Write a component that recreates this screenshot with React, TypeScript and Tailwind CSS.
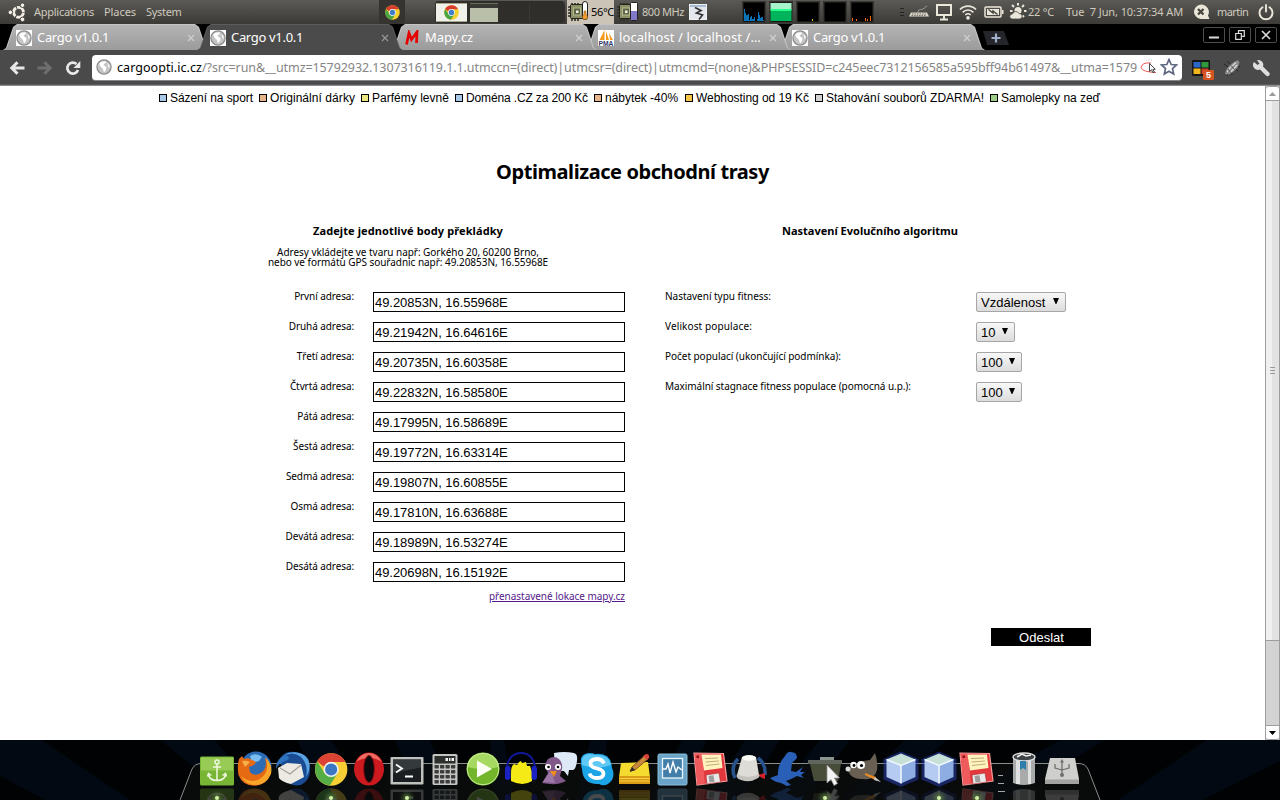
import type { ReactNode } from "react";

/* ---------- shared drawings ---------- */

function ChromeLogo({ className }: { className?: string }) {
  return (
    <svg viewBox="0 0 34 34" className={className}>
      <circle cx="17" cy="17" r="16.5" fill="#f7d02c" />
      <path d="M2.7 8.8 A16.5 16.5 0 0 0 15.5 33.4 L23.6 20.8 L17 17 L10.4 20.8Z" fill="#4aa544" />
      <path d="M2.7 8.8 A16.5 16.5 0 0 1 31.6 9.4 L17 9.4 L10 14.5Z" fill="#d93b2f" />
      <circle cx="17" cy="17" r="7.8" fill="#f2f2ee" />
      <circle cx="17" cy="17" r="6" fill="#3f7fc9" />
    </svg>
  );
}

function Globe({ square = false }: { square?: boolean }) {
  return (
    <svg viewBox="0 0 16 16" className="size-4 shrink-0">
      {square && <rect width="16" height="16" fill="#fff" />}
      <circle cx="8" cy="8" r="7.1" fill="#c4c4c4" stroke="#8a8a8a" strokeWidth="1.200" />
      <path d="M3 4.500 Q5 2 9.500 2.200 L10 4 L7.500 5 L8.500 7 L10.500 8 L10 11 L8 13.500 L7 10 L4.500 7.500Z" fill="#fff" />
      <path d="M11.500 4 L13.500 6 L13.800 9 L12.200 8Z" fill="#f4f4f4" />
    </svg>
  );
}

function Chip({ children }: { children: ReactNode }) {
  return (
    <svg viewBox="0 0 22 22" className="h-[22px] w-[22px] shrink-0">
      <path d="M1 6h3M1 9h3M1 12h3M1 15h3M5 2v3M8 2v3M11 2v3M5 17v3M8 17v3M11 17v3" stroke="#2e2f22" strokeWidth="1.6" />
      <rect x="3.5" y="3.5" width="13" height="14" rx="1" fill="#8c9166" stroke="#22231a" />
      <rect x="6.5" y="7" width="7" height="7" fill="#5f6446" stroke="#b6ba90" />
      <rect x="9" y="9.500" width="2.500" height="2.500" fill="#f0f1df" />
      {children}
    </svg>
  );
}

function Graph({ children }: { children?: ReactNode }) {
  return (
    <svg viewBox="0 0 24 22" className="mr-[3px] h-[22px] w-6 shrink-0">
      <rect x="0.5" y="0.5" width="23" height="21" fill="#000" stroke="#2b2a27" />
      <rect x="1" y="1" width="22" height="20" fill="none" stroke="#55534d" strokeWidth=".6" />
      {children}
    </svg>
  );
}

/* ---------- desktop panel ---------- */

function TopPanel() {
  return (
    <header className="flex h-6 items-center bg-linear-to-b from-[#5b5a56] to-[#3b3a36] text-[11px] whitespace-pre text-[#cfc9be]">
      <svg viewBox="0 0 18 22" className="ml-2 h-[22px] w-[18px] shrink-0">
        <circle cx="10.500" cy="11.300" r="4.900" fill="none" stroke="#f3efe6" strokeWidth="2.900" strokeDasharray="9.260 1" strokeDashoffset="-0.500" />
        <g fill="#f3efe6" stroke="#4b4a46" strokeWidth="1">
          <circle cx="2.400" cy="11.300" r="2.300" />
          <circle cx="14.500" cy="4.200" r="2.300" />
          <circle cx="14.500" cy="18.400" r="2.300" />
        </g>
      </svg>
      <span className="ml-2 w-[70px] tracking-[-0.27px]">Applications</span>
      <span className="w-[42px] tracking-[-0.07px]">Places</span>
      <span className="w-[233px] tracking-[-0.3px]">System</span>
      <div className="flex h-6 w-[26px] items-center justify-center bg-[#353431]">
        <ChromeLogo className="size-[15px]" />
      </div>

      <div className="ml-[30px] flex h-[22px] w-[130px] items-center gap-[3px] rounded bg-[#2f2e2b] px-px">
        <div className="flex h-[19px] w-[31px] items-center justify-center border-y border-[#a6a88c] bg-[#f1f1ec]">
          <ChromeLogo className="size-[15px]" />
        </div>
        <div className="h-[19px] w-[28px] border-t border-[#6b6d5c] bg-linear-to-b from-[#3a3a34] from-20% to-[#b9bfa9] to-20%" />
        <div className="h-[19px] w-[29px] border-r border-[#393835]" />
        <div className="h-[19px] w-[29px]" />
      </div>

      <div className="ml-0.5 flex h-6 w-[47px] items-center bg-[#cdc4b8] text-black">
        <Chip>
          <rect x="15.500" y="0.500" width="5" height="18" rx="2.500" fill="#fff" stroke="#222" />
          <path d="M17 10h2v3.500a2.600 2.600 0 1 1-2 0z" fill="#f39a2c" stroke="#7a4c0c" strokeWidth=".5" />
        </Chip>
        <span className="ml-0.5 tracking-[-0.32px]">56°C</span>
      </div>
      <div className="ml-0.5 flex w-[26px]">
        <Chip>
          <rect x="14.500" y="1.500" width="7" height="18" rx="1" fill="#fff" stroke="#222" />
          <rect x="15" y="10" width="6" height="9" fill="#8078c8" />
        </Chip>
      </div>
      <span className="w-[47px] tracking-[-0.43px]">800 MHz</span>
      <svg viewBox="0 0 18 18" className="size-[18px] shrink-0">
        <rect x="0.500" y="1.500" width="17" height="15" fill="#e4e8ee" stroke="#eef1f4" />
        <rect x="1" y="2" width="16" height="2" fill="#a9bbd3" />
        <path d="M6 4.500l6 3-4.500 2.500 6 2-3.500 4.500" fill="none" stroke="#333" strokeWidth="1.700" />
      </svg>

      <div className="ml-[35px] flex w-[135px]">
        <Graph>
          <path d="M2 20V8h1v4h1v2h2v-1h1v6h1v-3h1v-1h1v3h2v-2h1v4h2v-2h1v-7h1v3h1v3h1v-1h2v3h1v1z" fill="#0b74b8" />
        </Graph>
        <Graph>
          <rect x="1.500" y="2" width="21" height="7" fill="#a8f2cb" />
          <rect x="1.500" y="8" width="21" height="2" fill="#2aff8c" />
          <rect x="1.500" y="10" width="21" height="10" fill="#00b45c" />
        </Graph>
        <Graph>
          <path d="M16 18h1v2h-1z" fill="#e0c020" />
        </Graph>
        <Graph />
        <Graph>
          <path d="M2 20v-3h1v3zM6 20v-2h1v2zM15 20v-3h1v3zM17 20v-2h1v2zM20 20v-5h1v5z" fill="#ff6a10" />
        </Graph>
      </div>

      <div className="ml-[23px] flex h-2 w-1 flex-col justify-between">
        <div className="h-px bg-[#262522]" />
        <div className="h-px bg-[#262522]" />
        <div className="h-px bg-[#262522]" />
      </div>
      <svg viewBox="0 0 20 16" className="ml-[5px] h-4 w-5 shrink-0">
        <path d="M2 8.500h16l2 4H0z" fill="#dcd7cb" />
        <path d="M3 10h14M2.500 11.500h15" stroke="#77736a" strokeDasharray="1.500 1" />
        <path d="M9 8c0-3 3-2 5-3s2-2 4-3" fill="none" stroke="#a8a398" />
      </svg>
      <svg viewBox="0 0 18 18" className="ml-[6px] size-[18px] shrink-0" fill="none" stroke="#ebe6da" strokeWidth="2">
        <path d="M2 2h14v10H2zM5 16.500h8M9 13v3" />
      </svg>
      <svg viewBox="0 0 18 18" className="ml-[6px] size-[18px] shrink-0" fill="none" stroke="#ebe6da" strokeWidth="1.700">
        <path d="M1 6.500a11 11 0 0 1 16 0M3.700 9.300a7.300 7.300 0 0 1 10.600 0M6.300 12a3.900 3.900 0 0 1 5.400 0" />
        <circle cx="9" cy="14.800" r="1" fill="#ebe6da" />
      </svg>
      <svg viewBox="0 0 20 14" className="ml-[7px] h-3.5 w-5 shrink-0">
        <rect x="1" y="2" width="16" height="10" rx="1" fill="none" stroke="#ebe6da" strokeWidth="1.500" />
        <rect x="3" y="4" width="12" height="6" fill="#ebe6da" />
        <path d="M18 5h1.500v4H18z" fill="#ebe6da" />
        <path d="M4.500 4.500L9 8V6l4.500 3.500" stroke="#45443f" strokeWidth="1.500" fill="none" />
      </svg>
      <svg viewBox="0 0 18 18" className="ml-[5px] size-[18px] shrink-0">
        <circle cx="9" cy="7.500" r="3.500" fill="#ebe6da" />
        <path d="M9 0v2.500M3 2l2 2M15 2l-2 2M1 8h2.500M15 8h2.500M15 14l-1.500-1.500" stroke="#ebe6da" strokeWidth="2" />
        <path d="M3 16a2.500 2.500 0 0 1 .5-5 3.500 3.500 0 0 1 6.500-.5 2.800 2.800 0 0 1 1 5.500z" fill="#ebe6da" stroke="#4a4945" strokeWidth=".8" />
      </svg>
      <span className="ml-px w-[38px] tracking-[-0.22px]">22 °C</span>
      <span className="w-[126px] tracking-[-0.1px]">Tue  7 Jun, 10:37:34 AM</span>
      <svg viewBox="0 0 18 18" className="size-[18px] shrink-0">
        <path d="M9 1.500a8 7.500 0 0 1 7 11l1.500 3.500H9a8 7.300 0 0 1 0-14.500z" fill="#ebe6da" />
        <path d="M6 6l5.500 5.500M11.500 6L6 11.500" stroke="#45443f" strokeWidth="2.300" />
      </svg>
      <span className="ml-[7px] w-[40px] tracking-[-0.55px]">martin</span>
      <svg viewBox="0 0 18 18" className="size-[18px] shrink-0" fill="none" stroke="#ebe6da" strokeWidth="1.900" strokeLinecap="round">
        <path d="M5.500 4.300a6.500 6.500 0 1 0 7 0M9 2v6.500" />
      </svg>
    </header>
  );
}

/* ---------- browser ---------- */

function Tab({ icon, title, active = false, tracking, stack }: { icon: ReactNode; title: string; active?: boolean; tracking: string; stack: string }) {
  return (
    <div
      className={`relative -mr-3 h-[26px] w-[206px] shrink-0 p-px pb-0 [clip-path:polygon(0_100%,3px_92%,10px_12%,14px_0,192px_0,196px_12%,203px_92%,206px_100%)] ${stack} ${active ? "bg-[#5c5c5c]" : "bg-[#c4c4c4]"}`}
    >
      <div
        className={`flex h-full items-center pl-3 [clip-path:polygon(0_100%,3px_92%,10px_10%,13px_0,191px_0,194px_10%,201px_92%,204px_100%)] ${active ? "bg-[#4b4b4b]" : "bg-linear-to-b from-[#b4b4b4] to-[#9b9b9b]"}`}
      >
        {icon}
        <span className={`mt-px ml-[5px] w-[150px] text-[13px] whitespace-nowrap text-white ${tracking}`}>{title}</span>
        <svg viewBox="0 0 8 8" className="size-2 shrink-0" stroke={active ? "#969696" : "#cfcfcf"} strokeWidth="1.200">
          <path d="M1 1l6 6M7 1L1 7" />
        </svg>
      </div>
    </div>
  );
}

function WindowButton({ children }: { children: ReactNode }) {
  return (
    <div className="flex h-4 w-[22px] items-center justify-center rounded-[2px] border border-[#4d4d4d]">
      <svg viewBox="0 0 10 10" className="size-2.5" fill="none" stroke="#dcdcdc" strokeWidth="1.200">
        {children}
      </svg>
    </div>
  );
}

function TabStrip() {
  return (
    <div className="flex h-[26px] bg-black pl-[3px]">
      <Tab stack="z-10" icon={<Globe square />} title="Cargo v1.0.1" tracking="tracking-[-0.32px]" />
      <Tab stack="z-40" active icon={<Globe square />} title="Cargo v1.0.1" tracking="tracking-[-0.32px]" />
      <Tab
        stack="z-30"
        icon={
          <svg viewBox="0 0 16 16" className="size-4 shrink-0">
            <path d="M2.500 14.500L5 3l2.500 6.500L13 2l-.5 11" fill="none" stroke="#e60000" strokeWidth="2.700" />
          </svg>
        }
        title="Mapy.cz"
        tracking="tracking-[-0.1px]"
      />
      <Tab
        stack="z-20"
        icon={
          <svg viewBox="0 0 16 16" className="size-4 shrink-0">
            <rect width="16" height="16" fill="#fff" />
            <path d="M6.500 0v10H1.500zM8 1l3 9H8zM11 3l4 7h-3z" fill="#f59a1c" />
            <text x="0.500" y="15.800" fontSize="6.500" fontWeight="700" fill="#333a6b" fontFamily="Liberation Sans" textLength="15" lengthAdjust="spacingAndGlyphs">
              PMA
            </text>
          </svg>
        }
        title="localhost / localhost /…"
        tracking="tracking-[0.08px]"
      />
      <Tab stack="z-10" icon={<Globe square />} title="Cargo v1.0.1" tracking="tracking-[-0.32px]" />
      <div className="ml-2.5 mt-[7px] flex h-3.5 w-[26px] items-center justify-center bg-[#24262b] [clip-path:polygon(0_0,80%_0,100%_100%,16%_100%)]">
        <svg viewBox="0 0 10 10" className="size-2.5" stroke="#9fb0cb" strokeWidth="2.200">
          <path d="M5 .5v9M.5 5h9" />
        </svg>
      </div>
      <div className="mt-[3px] ml-auto flex gap-1 pr-[3px]">
        <WindowButton>
          <path d="M0 7.500h10" strokeWidth="2" />
        </WindowButton>
        <WindowButton>
          <path d="M3.500 3V.7h5.800v5.600H7M.7 3.500h5.600v5.800H.7z" />
        </WindowButton>
        <WindowButton>
          <path d="M1 1l8 8M9 1L1 9" strokeWidth="1.600" />
        </WindowButton>
      </div>
    </div>
  );
}

function Toolbar() {
  return (
    <div className="flex h-9 items-center border-b border-[#8d8a8d] bg-[#4a4a4a] shadow-[inset_0_-1px_0_#5a5a5a]">
      <svg viewBox="0 0 16 16" className="ml-[9px] size-4 shrink-0" fill="none" stroke="#e8e8e8" strokeWidth="3">
        <path d="M15.500 8H4M8.500 2.200L2.800 8l5.700 5.800" />
      </svg>
      <svg viewBox="0 0 16 16" className="ml-3 size-4 shrink-0" fill="none" stroke="#6e6e6e" strokeWidth="3">
        <path d="M.5 8H12M7.500 2.200L13.200 8l-5.700 5.800" />
      </svg>
      <svg viewBox="0 0 16 16" className="ml-3 size-4 shrink-0">
        <path d="M13 10A5.500 5.500 0 1 1 11.500 4" fill="none" stroke="#e8e8e8" strokeWidth="2.700" />
        <path d="M15.300 1v7H8.500z" fill="#e8e8e8" />
      </svg>
      <div className="ml-[11px] flex h-[26px] w-[1090px] shrink-0 items-center rounded border-b border-[#85838a] bg-white pl-1">
        <Globe />
        <div className="mt-0.5 ml-[5px] w-[1020px] overflow-hidden text-[12.500px] whitespace-nowrap text-[#858585]">
          <span className="text-black tracking-[0.06px]">cargoopti.ic.cz</span>
          <span className="tracking-[-0.085px]">
            /?src=run&amp;__utmz=15792932.1307316119.1.1.utmccn=(direct)|utmcsr=(direct)|utmcmd=(none)&amp;PHPSESSID=c245eec7312156585a595bff94b61497&amp;__utma=1579
          </span>
        </div>
        <svg viewBox="0 0 18 18" className="ml-[3px] size-[18px] shrink-0">
          <path d="M11 5Q2 4 1 9.500 2 14 16 14.500" fill="none" stroke="#ee5a5a" />
          <path d="M6 2l1 1M9 .5v2M12 1l-1 2" stroke="#c9c9c9" strokeWidth=".7" />
          <path d="M9.500 5.500v8l2-1.700 1.500 3 1.300-.7-1.400-2.800h2.400z" fill="#fff" stroke="#333" strokeWidth=".9" />
        </svg>
        <svg viewBox="0 0 18 18" className="ml-0.5 size-[18px] shrink-0" fill="#fff" stroke="#5f6880" strokeWidth="1.700">
          <path d="M9 1.500l2.200 5 5.300.5-4 3.600 1.200 5.400L9 13.200 4.300 16l1.200-5.400-4-3.600 5.300-.5z" />
        </svg>
      </div>
      <svg viewBox="0 0 22 22" className="mt-0.5 ml-2.5 size-[22px] shrink-0">
        <rect x="0" y="2" width="18" height="16" rx="1" fill="#161616" />
        <rect x="1.500" y="4" width="7" height="5.500" fill="#2b66c9" />
        <rect x="9.500" y="4" width="7" height="5.500" fill="#2f9a3c" />
        <rect x="1.500" y="10.500" width="7" height="5.500" fill="#f2b51d" />
        <rect x="9.500" y="10.500" width="7" height="5.500" fill="#d33c2c" />
        <rect x="11" y="12" width="11" height="10" rx="1" fill="#d4551f" />
        <text x="14" y="20.300" fontSize="9" fontWeight="700" fill="#fff" fontFamily="Liberation Sans">
          5
        </text>
      </svg>
      <svg viewBox="0 0 20 18" className="ml-2 h-[18px] w-5 shrink-0">
        <path d="M2 5l4 3M5 2l4 4M10 16l-1-5M5 17l1-5M16 12l-4-3M18 8l-4-1" stroke="#252525" />
        <path d="M3 15Q4 8 12 3l4-2 1.500 2.500L16 8q-5 6-10 7.500z" fill="#8d8d8d" />
        <path d="M5 13Q8 8 14 3.500M8 14l7-8" stroke="#d9d9d9" strokeWidth="1.200" fill="none" />
        <path d="M6 10l3 4M9 6.500l3.500 4" stroke="#4c4c4c" />
      </svg>
      <svg viewBox="0 0 18 18" className="ml-2.5 size-[18px] shrink-0">
        <path d="M1 5.500A4.800 4.800 0 0 1 2 3l3.500 3L7.500 4.500 5 1.300A4.800 4.800 0 0 1 11 7.500L17 13.500a2 2 0 0 1-3 3L8 10.500A5 5 0 0 1 1 5.500z" fill="#dedede" />
      </svg>
    </div>
  );
}

/* ---------- page ---------- */

const ads = [
  { text: "Sázení na sport", box: "w-[100px]", color: "bg-[#a9c9ea]", tracking: "tracking-[-0.07px]" },
  { text: "Originální dárky", box: "w-[102px]", color: "bg-[#e8b48a]", tracking: "tracking-[0.06px]" },
  { text: "Parfémy levně", box: "w-[94px]", color: "bg-[#ece77f]", tracking: "tracking-[0.02px]" },
  { text: "Doména .CZ za 200 Kč", box: "w-[139px]", color: "bg-[#a9c9ea]", tracking: "tracking-[-0.14px]" },
  { text: "nábytek -40%", box: "w-[91px]", color: "bg-[#e8b48a]", tracking: "tracking-[-0.03px]" },
  { text: "Webhosting od 19 Kč", box: "w-[130px]", color: "bg-[#f8c548]", tracking: "tracking-[-0.05px]" },
  { text: "Stahování souborů ZDARMA!", box: "w-[175px]", color: "bg-[#d2d2d2]", tracking: "tracking-[0px]" },
  { text: "Samolepky na zeď", box: "w-[111px]", color: "bg-[#9ccc85]", tracking: "tracking-[-0.03px]" },
];

const addresses = [
  ["První adresa:", "49.20853N, 16.55968E"],
  ["Druhá adresa:", "49.21942N, 16.64616E"],
  ["Třetí adresa:", "49.20735N, 16.60358E"],
  ["Čtvrtá adresa:", "49.22832N, 16.58580E"],
  ["Pátá adresa:", "49.17995N, 16.58689E"],
  ["Šestá adresa:", "49.19772N, 16.63314E"],
  ["Sedmá adresa:", "49.19807N, 16.60855E"],
  ["Osmá adresa:", "49.17810N, 16.63688E"],
  ["Devátá adresa:", "49.18989N, 16.53274E"],
  ["Desátá adresa:", "49.20698N, 16.15192E"],
];

const settings = [
  { label: "Nastavení typu fitness:", value: "Vzdálenost", box: "w-[90px]", tracking: "tracking-[-0.03px]" },
  { label: "Velikost populace:", value: "10", box: "w-[39px]", tracking: "tracking-[0.12px]" },
  { label: "Počet populací (ukončující podmínka):", value: "100", box: "w-[46px]", tracking: "tracking-[-0.04px]" },
  { label: "Maximální stagnace fitness populace (pomocná u.p.):", value: "100", box: "w-[46px]", tracking: "tracking-[-0.06px]" },
];

function Page() {
  return (
    <main className="min-w-0 flex-1 text-[10px] leading-[10px] text-black">
      <nav className="flex h-6 items-center pl-[159px] font-['Liberation_Sans',sans-serif] text-[12px] leading-4 whitespace-nowrap">
        {ads.map((ad) => (
          <a key={ad.text} className={`flex shrink-0 items-center gap-[3px] ${ad.box} ${ad.tracking}`}>
            <span className={`size-2 border border-black ${ad.color}`} />
            {ad.text}
          </a>
        ))}
      </nav>
      <h1 className="mt-[50px] text-center text-[20px] leading-6 font-bold tracking-[-0.42px]">Optimalizace obchodní trasy</h1>

      <div className="mt-[41px] flex pl-[183px]">
        <section className="w-[442px]">
          <h2 className="h-4 pl-2 text-center text-[11px] leading-3 font-bold tracking-[0.1px]">Zadejte jednotlivé body překládky</h2>
          <p className="mt-[6px] pl-2 text-center tracking-[-0.04px]">
            Adresy vkládejte ve tvaru např: Gorkého 20, 60200 Brno,
            <br />
            nebo ve formátu GPS souřadnic např: 49.20853N, 16.55968E
          </p>
          <div className="mt-[25px] flex flex-col gap-2.5">
            {addresses.map(([label, value]) => (
              <label key={label} className="flex h-5">
                <span className="-mt-px w-[171px] text-right tracking-[-0.09px]">{label}</span>
                <input
                  readOnly
                  value={value}
                  className="ml-[19px] h-5 w-[252px] border border-black px-px font-['Liberation_Sans',sans-serif] text-[13px] tracking-[-0.05px] outline-none"
                />
              </label>
            ))}
          </div>
          <p className="mt-[9px] text-right tracking-[-0.04px] text-[#551a8b]">
            <a className="underline">přenastavené lokace mapy.cz</a>
          </p>
        </section>

        <section className="ml-10 w-[426px]">
          <h2 className="h-4 pl-[117px] text-[11px] leading-3 font-bold">Nastavení Evolučního algoritmu</h2>
          <div className="mt-[51px] flex flex-col gap-2.5">
            {settings.map((s) => (
              <div key={s.label} className="flex h-5">
                <span className={`-mt-px w-[311px] whitespace-nowrap ${s.tracking}`}>{s.label}</span>
                <div
                  className={`flex h-5 items-center justify-between rounded-[2px] border border-[#a6a6a6] bg-linear-to-b from-[#f8f8f8] to-[#dcdcdc] pr-1.5 pl-1 font-['Liberation_Sans',sans-serif] text-[13px] ${s.box}`}
                >
                  <span className="mt-px">{s.value}</span>
                  <svg viewBox="0 0 6 6" className="mb-0.5 size-1.5">
                    <path d="M0 0h6L3.400 6h-.8z" />
                  </svg>
                </div>
              </div>
            ))}
          </div>
          <button className="mt-[226px] ml-auto block h-[18px] w-[100px] bg-black pl-px text-center font-['Liberation_Sans',sans-serif] text-[13px] leading-[19px] text-white">
            Odeslat
          </button>
        </section>
      </div>
    </main>
  );
}

function Scrollbar() {
  return (
    <aside className="flex w-[15px] flex-col border-x border-[#9d9d9d] bg-[#d3d3d3]">
      <div className="flex h-[15px] items-center justify-center rounded-t-[3px] border-y border-[#9d9d9d] bg-white">
        <svg viewBox="0 0 7 4" className="h-1 w-[7px]" fill="#9b9b9b">
          <path d="M3.500 0L7 4H0z" />
        </svg>
      </div>
      <div className="flex h-[540px] flex-col items-center justify-center gap-0.5 border-b border-[#9d9d9d] bg-linear-to-r from-[#f0f0f0] from-50% to-[#e2e2e2] to-50%">
        <div className="h-px w-[5px] bg-[#999]" />
        <div className="h-px w-[5px] bg-[#999]" />
        <div className="h-px w-[5px] bg-[#999]" />
      </div>
      <div className="mt-auto flex h-[15px] items-center justify-center rounded-b-[3px] border-y border-[#9d9d9d] bg-white">
        <svg viewBox="0 0 7 4" className="h-1 w-[7px]">
          <path d="M3.500 4L7 0H0z" />
        </svg>
      </div>
    </aside>
  );
}

/* ---------- dock ---------- */

const floppy = (
  <g>
    <path d="M2 2L31.500 2.500 35 30 5 34z" fill="#e2373c" stroke="#f49a9a" strokeWidth="1.200" />
    <path d="M2.500 2.500L10 2.700 13 33 5.300 33.500z" fill="#ef5a5c" />
    <path d="M9.500 3.500L29 3.500 30.500 17 12 19.500z" fill="#fff3bf" />
    <path d="M13 7.500l13-.5M13.500 11l13.500-1M14 14.500l13.500-1.500" stroke="#c2ad74" />
    <path d="M14 24l13-2 1.500 9-13.500 2z" fill="#e8e8e8" stroke="#a33" strokeWidth=".6" />
    <path d="M16.500 25l5-.7 1 6.500-5 .7z" fill="#9d9d9d" />
    <rect x="4.500" y="4.500" width="2.500" height="2.500" fill="#8a1010" />
  </g>
);

const cube = (
  <g>
    <path d="M19 0.500L36.500 8v20.500L19 36 1.500 28.500V8z" fill="#2a3fb5" opacity=".5" />
    <path d="M19 2.500L33.500 8.500 19 14.500 4.500 8.500z" fill="#c6e0d8" />
    <path d="M4.500 8.500L19 14.500v18L4.500 26z" fill="#b5cbf2" />
    <path d="M33.500 8.500L19 14.500v18L33.500 26z" fill="#8eade3" />
    <path d="M4.500 8.500L19 14.500l14.500-6M19 14.500v18" fill="none" stroke="#f3f8ff" strokeWidth="1.500" />
  </g>
);

const dockItems: { name: string; running?: boolean; art: ReactNode }[] = [
  {
    name: "docky",
    running: true,
    art: (
      <g>
        <rect x="2" y="5.500" width="34" height="29" rx="1.500" fill="#78b535" />
        <rect x="3" y="6.500" width="32" height="13" fill="#98cb55" />
        <g fill="none" stroke="#eef7e0" strokeWidth="1.500">
          <circle cx="19" cy="11" r="2" />
          <path d="M19 13v16M15 16h8M10.500 23.500c1 5 5 6 8.500 6s7.500-1 8.500-6M9.500 25.500l1-3 3 2M28.500 25.500l-1-3-3 2" />
        </g>
      </g>
    ),
  },
  {
    name: "firefox",
    art: (
      <g>
        <circle cx="20" cy="16" r="15.500" fill="#2d6cb5" />
        <path d="M14 5q6-4 12 1l-3 4-7 2z" fill="#79bdf0" />
        <path d="M3 8l3-3 2 3q5-2 8 1l4 2-2 3-5 2 1 5q4 5 11 1 7-5 4-15 5 4 6 11-1 14-14 16.500Q7 36 2.500 24 1 15 3 8z" fill="#e66a12" />
        <path d="M29 6q8 7 6 17-5 11-15 11Q9 34 5 25q8 7 17 4 10-5 9-15 0-5-2-8z" fill="#f9a52a" />
        <path d="M6 10q4-1 8 1l-5 5z" fill="#f7b04a" />
      </g>
    ),
  },
  {
    name: "thunderbird",
    art: (
      <g>
        <path d="M6 8Q10-1 22 1q13 3 14 16 1 12-9 17-10 2-17-5z" fill="#1a4c94" />
        <path d="M8 6Q18-1 27 6q8 8 5 20 6-9 2-18Q28-1 14 2z" fill="#5aa3e3" />
        <path d="M4 17l9-5 14 1 3 13-13 7q-9-2-12-6z" fill="#eceae2" />
        <path d="M6 17l10 6 11-9" fill="none" stroke="#a3a099" strokeWidth="1.200" />
        <path d="M2 18Q2 9 9 5q6-2 6 3l-6 3q-5 2-7 7z" fill="#2e73bf" />
      </g>
    ),
  },
  {
    name: "chrome",
    running: true,
    art: (
      <g transform="translate(2.500 1.800) scale(.98)">
        <circle cx="17" cy="17" r="16.500" fill="#f7cf35" />
        <path d="M2.700 8.800A16.500 16.500 0 0 0 15.500 33.400L23.600 20.800 17 17 10.400 20.800z" fill="#55ad45" />
        <path d="M2.700 8.800A16.500 16.500 0 0 1 31.600 9.400H17L10 14.500z" fill="#dc4334" />
        <circle cx="17" cy="17" r="7.800" fill="#f3f3f3" />
        <circle cx="17" cy="17" r="6.200" fill="#3b77c2" />
      </g>
    ),
  },
  {
    name: "opera",
    art: (
      <g>
        <ellipse cx="19" cy="18" rx="15" ry="16.500" fill="#cc1a1f" />
        <path d="M6 11Q11 2 19 2t13 9q-6-4-13-4T6 11z" fill="#ef6b62" />
        <ellipse cx="19" cy="18" rx="5.300" ry="13.500" fill="#08090c" stroke="#8c0b10" />
      </g>
    ),
  },
  {
    name: "terminal",
    running: true,
    art: (
      <g>
        <rect x="2.500" y="6" width="33" height="27.500" rx="1" fill="#bfc1bd" />
        <rect x="5" y="8.500" width="28" height="22.500" fill="#1b1e20" />
        <path d="M5 8.500h28v8L5 22z" fill="#34393c" />
        <path d="M8 13.500l6 4-6 4M17 25.500h8" fill="none" stroke="#fff" strokeWidth="1.800" />
      </g>
    ),
  },
  {
    name: "calculator",
    art: (
      <g>
        <rect x="6.500" y="3" width="25" height="31" rx="1.500" fill="#c4c4c2" />
        <rect x="8.500" y="5" width="21" height="7.500" fill="#2c2f2c" />
        <path d="M19.500 8.500h2.500M23 8.500h1.500M25.500 8.500h2.500" stroke="#f2f2f2" strokeWidth="3" />
        <g fill="#3b3d3c">
          {[14, 19, 24, 29].map((y) => [8.5, 14, 19.5, 25].map((x) => <rect key={`${x}-${y}`} x={x} y={y} width="4.300" height="3.400" rx=".6" />))}
        </g>
      </g>
    ),
  },
  {
    name: "player",
    art: (
      <g>
        <circle cx="19" cy="18" r="16.500" fill="#73b52b" />
        <path d="M3 16a16 14 0 0 1 32 0q-16 4-32 0z" fill="#a6d962" />
        <circle cx="19" cy="18" r="15.800" fill="none" stroke="#c9ec96" />
        <path d="M13 9.500v17L28 18z" fill="#fbfff4" />
      </g>
    ),
  },
  {
    name: "audacity",
    art: (
      <g>
        <path d="M5 20C3-4 35-4 33 20" fill="none" stroke="#10189a" strokeWidth="2" />
        <path d="M9 22q0-7 3-9l3 1 2-3 2-1 1 2 4-1 1 4 3 0 2 6v9q-9 6-21 0z" fill="#f5ea16" />
        <rect x="3" y="15" width="5.500" height="14" rx="2.700" fill="#1a22c4" />
        <rect x="29.500" y="15" width="5.500" height="14" rx="2.700" fill="#1a22c4" />
      </g>
    ),
  },
  {
    name: "pidgin",
    art: (
      <g>
        <path d="M14 2q10-2 20 0 4 1 3 8-1 8-4 9h-4l-1 6-4-5h-9z" fill="#dde9f6" />
        <path d="M8 8q6-4 11 0 4 4 3 10l-2 7 6 5q-8 5-24 2l6-10Q3 14 8 8z" fill="#80588a" />
        <path d="M3 31l8-12 4 13z" fill="#9b78a6" />
        <circle cx="8" cy="16" r="3" fill="#fff" />
        <circle cx="18" cy="16" r="3" fill="#fff" />
        <circle cx="8.500" cy="16" r="1.300" />
        <circle cx="18" cy="16" r="1.300" />
        <path d="M10 20l7 0-3 6z" fill="#ef8b1e" />
      </g>
    ),
  },
  {
    name: "skype",
    art: (
      <g>
        <path d="M3 11Q2 3 11 2q4 0 6 1 16-2 17 14 3 6 0 12-6 8-13 4Q5 34 4 18q-1-3-1-7z" fill="#1ba5e6" />
        <path d="M4 11Q4 3 11 3q4 0 6 1 14-1 16 10-14 5-29 0z" fill="#5fc8f5" />
        <path d="M26 12.500q-2-4.500-7-4.500-6.500 0-6.500 4.700 0 3.300 6.500 4.800t6.500 5q0 4.500-6.500 4.500-6 0-7.500-4.500" fill="none" stroke="#fff" strokeWidth="3.800" />
      </g>
    ),
  },
  {
    name: "notes",
    art: (
      <g>
        <path d="M5 12l27-1 2 15H3z" fill="#f5db2f" />
        <path d="M3 25h31v8H3z" fill="#d99c12" />
        <path d="M3 27.500h31M3 30h31" stroke="#f6cf45" />
        <path d="M16 16L29 4l3 4-13 11-5 1z" fill="#c8893d" stroke="#6d4415" strokeWidth=".8" />
        <path d="M27 5l3-2q4 0 3 4l-2 2z" fill="#d4433a" />
        <path d="M16 16l3 3-5 2z" fill="#2b2b2b" />
      </g>
    ),
  },
  {
    name: "monitor",
    art: (
      <g>
        <rect x="4" y="3" width="29" height="31" rx="1.500" fill="#6aa5c9" stroke="#8cbdd9" />
        <rect x="8.500" y="7.500" width="20" height="19.500" fill="#427ea8" stroke="#eaf5fb" strokeWidth="1.300" />
        <path d="M9 18h3l2-5 2 9 3-11 3 10 2-5 4 3" fill="none" stroke="#fff" strokeWidth="1.400" />
      </g>
    ),
  },
  { name: "floppy", art: floppy },
  {
    name: "backup",
    art: (
      <g>
        <path d="M8 8Q0 16 5 27M28 7q8 6 7 17" fill="none" stroke="#28528c" strokeWidth="3.500" />
        <path d="M28 24l7-2v6l-3-1z" fill="#d3202a" />
        <path d="M12 6q7-4 14 0l3 18q-10 8-22 0z" fill="#dddcd7" />
        <path d="M7 23q-2 4 4 6 9 3 15-1 5-2 3-5-11 6-22 0z" fill="#c4c3bd" />
        <ellipse cx="19" cy="7" rx="7" ry="2.800" fill="#fbfbf8" />
      </g>
    ),
  },
  {
    name: "frog",
    art: (
      <path
        d="M17 5q3-5 6-4 6 0 6 6l-5 5-1 8 5 1 7-5-3 5 5 0-4 3 3 3-7-2-6 3-5 2 5 4-4 1-6-3Q6 31 2 27l8-3Q9 14 17 5z"
        fill="#2a5fb8"
      />
    ),
  },
  {
    name: "trash-cursor",
    running: true,
    art: (
      <g>
        <path d="M14 6h14v3H14z" fill="#8d938d" />
        <path d="M2 9h34v4H2z" fill="#60665d" />
        <path d="M4 13h31l-3 17H8z" fill="#484d3a" />
        <path d="M21 14v18l4-3.500 3 6 3.500-2-3-5.500h5z" fill="#f3f3f3" stroke="#8e8e8e" strokeWidth=".8" />
      </g>
    ),
  },
  {
    name: "gimp",
    art: (
      <g>
        <path d="M9 12q5 1 10-2l7-1 5-7q3 8 2 17-3 11-14 9-11 1-15-8z" fill="#695f53" />
        <circle cx="4" cy="18" r="2.500" fill="#dcdcdc" />
        <circle cx="9.500" cy="14" r="3.200" fill="#fff" />
        <circle cx="17" cy="14" r="4" fill="#fff" />
        <circle cx="10" cy="14.500" r="1.400" />
        <circle cx="17.500" cy="14.500" r="1.600" />
        <path d="M21 22l11 4-1 3-10-5z" fill="#e78b2a" />
        <path d="M31 26l6 5-7-2z" fill="#ccc" />
      </g>
    ),
  },
  { name: "box-a", art: cube },
  { name: "box-b", running: true, art: cube },
  { name: "save", running: true, art: floppy },
];

const placeItems: { name: string; art: ReactNode }[] = [
  {
    name: "bin",
    art: (
      <g>
        <path d="M8 6l22 0v26q-11 4-22 0z" fill="#a9abab" />
        <path d="M11 8h4v25h-4zM23 8h3v25h-3z" fill="#e0e1e1" />
        <ellipse cx="19" cy="6" rx="11" ry="4" fill="#3f4345" stroke="#dedede" strokeWidth="1.300" />
        <path d="M12 6l5-3 4 2 5-1" stroke="#f2f2f2" strokeWidth="1.500" fill="none" />
        <path d="M15 10h6v9l-3-2-3 2z" fill="#2f7fae" />
      </g>
    ),
  },
  {
    name: "drive",
    art: (
      <g>
        <path d="M7 7h25l4 21v5H2v-5z" fill="#cfcfcd" />
        <path d="M2 28.500h34V33H2z" fill="#a2a2a0" />
        <path d="M19 10v14M19 19l-7-2v-4M19 19l7-2v-4" fill="none" stroke="#6e6e6c" strokeWidth="1.300" />
        <path d="M19 8l2 3.500h-4z" fill="#6e6e6c" />
        <circle cx="19" cy="24" r="2" fill="#6e6e6c" />
      </g>
    ),
  },
];

function DockIcon({ art, running = false }: { art: ReactNode; running?: boolean }) {
  return (
    <div className="relative flex w-[38px] shrink-0 flex-col">
      <svg viewBox="0 0 38 36" className="h-9 w-[38px]">
        {art}
      </svg>
      <div className="h-[13px] overflow-hidden">
        <svg viewBox="0 0 38 36" className="h-9 w-[38px] -scale-y-100 opacity-25">
          {art}
        </svg>
      </div>
      {running && <span className="absolute bottom-0 left-[17px] size-1 rounded-full bg-[#d4f0a6] shadow-[0_0_5px_2px_#5f8540]" />}
    </div>
  );
}

function Dock() {
  return (
    <footer className="relative h-[60px] overflow-hidden bg-[#010203]">
      <svg viewBox="0 0 1280 60" className="absolute inset-0 h-[60px] w-full">
        <g fill="#020912">
          <path d="M0 0h42l88 60H45L0 36z" />
          <path d="M160 0h55l50 60h-30z" />
          <path d="M297 0h34l40 60h-45z" />
          <path d="M395 0h35l25 60h-35zM490 0h14l10 60h-20zM590 0h17l-6 60h-25zM682 0h25l-30 60h-27zM745 0h35l-40 60h-33z" />
          <path d="M820 0h30l-45 60h-35zM905 0h42l-70 60h-36zM1060 0h45l-100 60h-50zM1206 0h74v21l-77 39h-85z" />
        </g>
        <path d="M180 60L192 29q3-5.500 9-5.500h878q6 0 9 5.500l12 31" fill="#0c0e0e" fillOpacity=".75" stroke="#8b8d8d" strokeWidth="1" />
      </svg>
      <div className="relative flex pt-[11px] pl-[198px]">
        {dockItems.map((item) => (
          <DockIcon key={item.name} art={item.art} running={item.running} />
        ))}
        <div className="flex w-[9px] flex-col gap-[7px] pt-[24px] pl-0.5">
          <div className="h-px w-[5px] bg-[#a8a8a8]" />
          <div className="h-px w-[6px] bg-[#a8a8a8]" />
          <div className="h-px w-[7px] bg-[#a8a8a8]" />
        </div>
        {placeItems.map((item) => (
          <DockIcon key={item.name} art={item.art} />
        ))}
      </div>
    </footer>
  );
}

export default function App() {
  return (
    <div className="flex h-[800px] w-[1280px] flex-col overflow-hidden bg-white font-['Noto_Sans',sans-serif]">
      <TopPanel />
      <TabStrip />
      <Toolbar />
      <div className="flex h-[654px]">
        <Page />
        <Scrollbar />
      </div>
      <Dock />
    </div>
  );
}
